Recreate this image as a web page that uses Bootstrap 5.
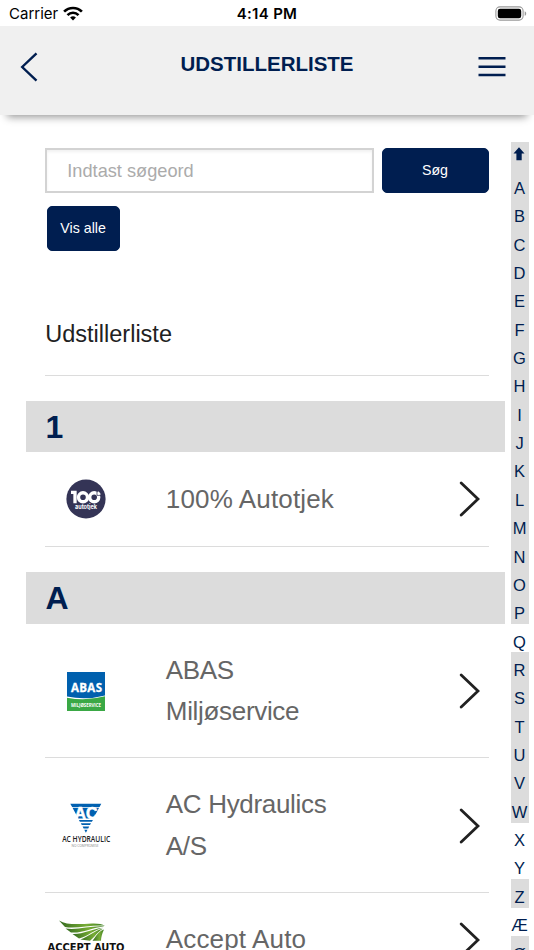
<!DOCTYPE html>
<html lang="da">
<head>
<meta charset="utf-8">
<meta name="viewport" content="width=device-width, initial-scale=1">
<title>Udstillerliste</title>
<link href="https://cdn.jsdelivr.net/npm/bootstrap@5.3.0/dist/css/bootstrap.min.css" rel="stylesheet">
<style>
  :root { --navy: #001e50; --band: #dcdcdc; }
  body { font-family: "Liberation Sans", Arial, sans-serif; color: #212121; height: 950px; overflow: hidden; background: #fff; }
  svg { display: block; flex: none; }
  .status-bar { height: 26px; padding: 1px 7px 0 9px; font: 500 15px/26px Inter, sans-serif; color: #000; }
  .status-bar > * { flex: 1 1 0; }
  .carrier { font-weight: 400; font-size: 15px; }
  .clock { font-weight: 600; letter-spacing: .3px; position: relative; left: -1px; }
  .app-bar { height: 89px; background: #f0f0f0; padding: 0 28px 0 20px; box-shadow: 0 9px 8px -7px rgba(0,0,0,.42); color: var(--navy); }
  .app-bar h1 { font-size: 20.5px; font-weight: 700; line-height: 24px; margin: 0 0 13px 18px; }
  .app-bar svg { margin-bottom: 8px; }
  .main-col { width: 505px; padding: 32.5px 0 0 26px; }
  .inset { margin-left: 19.3px; margin-right: 16.5px; }
  .search-input { width: 328.5px; height: 45px; border: 2px solid #d3d3d3; border-radius: 0; padding: 2px 20px 0; font-size: 18.2px; box-shadow: inset 0 2px 3px rgba(0,0,0,.06); }
  .search-input::placeholder { color: #ababab; opacity: 1; }
  .btn-navy { --bs-btn-bg: #001e50; --bs-btn-color: #fff; --bs-btn-border-color: #001e50; --bs-btn-hover-bg: #0a2c66; --bs-btn-hover-color: #fff; height: 45px; border-radius: 5px; font-size: 14.2px; padding: 1px 0 0; }
  .btn-search { width: 107px; }
  .btn-all { width: 73px; margin: 13px 0 0 1.3px; }
  .list-title { font-size: 23.5px; line-height: 30px; margin-top: 68px; margin-bottom: 0; padding-bottom: 26px; border-bottom: 1.5px solid #dcdcdc; font-weight: 400; }
  .band { height: 51.5px; margin-top: 25px; padding-left: 19.5px; background: var(--band); color: var(--navy); font-size: 32px; font-weight: 700; line-height: 52px; margin-bottom: 0; }
  .entry { padding: 26.5px 9px 26.6px 0; border-bottom: 1.5px solid #dcdcdc; }
  .entry.tall { padding-top: 26px; padding-bottom: 25.2px; }
  .entry-logo { width: 81px; }
  .entry-name { padding-left: 39.5px; font-size: 26px; letter-spacing: .15px; line-height: 41.2px; color: #666; }
  .tall .entry-name { letter-spacing: -.32px; }
  .alpha { width: 18px; margin: 27px 0 0 5.5px; font-size: 16.5px; color: var(--navy); }
  .alpha a { height: 28.37px; flex: none; padding-top: 9.5px; color: inherit; text-decoration: none; background: var(--band); line-height: 1; }
  .alpha a.top-link { padding-top: 5px; padding-right: 1px; }
  .alpha a.none { background: transparent; }
</style>
<script src="https://cdn.jsdelivr.net/npm/bootstrap@5.3.0/dist/js/bootstrap.bundle.min.js"></script>
</head>
<body>
<div class="status-bar d-flex align-items-center">
  <div class="d-flex align-items-center carrier">Carrier
    <svg width="22" height="16" viewBox="0 0 22 16" fill="none" stroke="#000" stroke-width="2.6" class="ms-1"><path d="M2.1 5.7a12.4 12.4 0 0 1 17.8 0M5.5 9.1a7.7 7.7 0 0 1 11 0"/><path d="M11 14.5 8.1 11.6a4.1 4.1 0 0 1 5.8 0Z" fill="#000" stroke="none"/></svg>
  </div>
  <div class="text-center clock">4:14 PM</div>
  <div class="d-flex justify-content-end">
    <svg width="32" height="15" viewBox="0 0 32 15"><rect x=".9" y=".9" width="27.2" height="13.2" rx="4" fill="none" stroke="#999" stroke-width="1.1"/><rect x="2.8" y="2.8" width="23.4" height="9.4" rx="2.2"/><path d="M29.7 5.2c2 .8 2 3.8 0 4.6z" fill="#999"/></svg>
  </div>
</div>
<header class="app-bar position-relative d-flex align-items-center justify-content-between">
  <svg width="18" height="30" viewBox="0 0 18 30" fill="none" stroke="#001e50" stroke-width="2.4"><path d="M16.500 1.300 2.200 15l14.300 13.700"/></svg>
  <h1>UDSTILLERLISTE</h1>
  <svg width="28" height="20" viewBox="0 0 28 20" fill="#001e50"><path d="M.5 0h27v2.500H.5zM.5 8.500h27v2.500H.5zM.5 16.700h27v2.500H.5z"/></svg>
</header>
<div class="d-flex">
  <main class="main-col flex-shrink-0">
    <form class="inset">
      <div class="d-flex justify-content-between">
        <input class="form-control search-input" type="text" placeholder="Indtast søgeord">
        <button class="btn btn-navy btn-search" type="button">Søg</button>
      </div>
      <button class="btn btn-navy btn-all" type="button">Vis alle</button>
    </form>
    <h2 class="list-title inset">Udstillerliste</h2>

    <h3 class="band">1</h3>
    <div class="entry inset d-flex align-items-center">
      <div class="entry-logo d-flex justify-content-center">
        <svg width="40" height="40" viewBox="0 0 40 40"><circle cx="20" cy="20" r="19.6" fill="#343456"/><path d="M5 13.400h4V24.300" fill="none" stroke="#fff" stroke-width="3.300"/><g fill="none" stroke="#fff" stroke-width="3.400"><circle cx="17" cy="18.300" r="4.500"/><circle cx="28.200" cy="18.300" r="4.500"/></g><path d="M31 11.800v4.500h3.400" fill="none" stroke="#343456" stroke-width=".8"/><path d="M31.800 12.300c1.700.7 2.700 1.900 2.800 3.400h-2.800z" fill="#fff"/><text x="20" y="30.200" text-anchor="middle" textLength="22" lengthAdjust="spacingAndGlyphs" font-family="Inter, sans-serif" font-weight="700" font-size="6.600" fill="#fff">autotjek</text></svg>
      </div>
      <div class="entry-name flex-grow-1">100% Autotjek</div>
      <svg width="21" height="36" viewBox="0 0 21 36" fill="none" stroke="#212121" stroke-width="2.8" stroke-linecap="round"><path d="M2.2 2 19 18 2.2 34"/></svg>
    </div>

    <h3 class="band">A</h3>
    <div class="entry tall inset d-flex align-items-center">
      <div class="entry-logo d-flex justify-content-center">
        <svg width="38" height="39" viewBox="0 0 38 39"><path d="M0 0h38v39H0z" fill="#fff"/><path d="M0 0h38v23.500Q19 28.500 0 24.500z" fill="#0060ae"/><path d="M0 25.700q19 3.600 38-1.400V39H0z" fill="#3aa845"/><text x="4" y="20" textLength="31" lengthAdjust="spacing" font-family="Open Sans, sans-serif" font-weight="700" font-size="11.500" fill="#fff" stroke="#fff" stroke-width=".3">ABAS</text><text x="19" y="35.200" text-anchor="middle" textLength="30" lengthAdjust="spacingAndGlyphs" font-family="Open Sans, sans-serif" font-weight="700" font-size="5" fill="#fff">MILJØSERVICE</text></svg>
      </div>
      <div class="entry-name flex-grow-1">ABAS<br>Miljøservice</div>
      <svg width="21" height="36" viewBox="0 0 21 36" fill="none" stroke="#212121" stroke-width="2.8" stroke-linecap="round"><path d="M2.2 2 19 18 2.2 34"/></svg>
    </div>
    <div class="entry tall inset d-flex align-items-center">
      <div class="entry-logo d-flex justify-content-center">
        <svg width="50" height="46" viewBox="0 0 50 46"><path d="M9.300.7h31l-1.800 3.200H11.100zM11.500 4.700h26.600l-5.800 10.900H17.300zM17.900 17h14l-1 1.800H18.900zM19.800 20.300h10.200l-1 1.800h-8.200zM21.600 23.600h6.600l-1 1.800h-4.600zM23.300 26.800h3.200L24.900 29.700z" fill="#0060b0"/><text x="24.900" y="15.700" text-anchor="middle" textLength="23" lengthAdjust="spacingAndGlyphs" font-family="Liberation Sans, sans-serif" font-weight="700" font-size="16.500" fill="#fff" stroke="#fff" stroke-width=".6">AC</text><text x="25.200" y="39" text-anchor="middle" textLength="48" lengthAdjust="spacingAndGlyphs" font-family="Open Sans, sans-serif" font-weight="600" font-size="8" fill="#222">AC HYDRAULIC</text><text x="24" y="43.800" text-anchor="middle" textLength="27" lengthAdjust="spacingAndGlyphs" font-family="Open Sans, sans-serif" font-size="4" fill="#888">NO COMPROMISE</text></svg>
      </div>
      <div class="entry-name flex-grow-1">AC Hydraulics<br>A/S</div>
      <svg width="21" height="36" viewBox="0 0 21 36" fill="none" stroke="#212121" stroke-width="2.8" stroke-linecap="round"><path d="M2.2 2 19 18 2.2 34"/></svg>
    </div>
    <div class="entry inset d-flex align-items-center">
      <div class="entry-logo d-flex justify-content-center">
        <svg width="80" height="40" viewBox="0 0 80 40"><defs><linearGradient id="leaf" x1="0" x2="1"><stop offset="0" stop-color="#346b20"/><stop offset=".6" stop-color="#78ad35"/><stop offset="1" stop-color="#3c7c22"/></linearGradient></defs><g fill="url(#leaf)"><path d="M13 .5c8 5 21 3.500 33 3 6-.2 10 .6 13 2.200C45 4.800 30 9 19 7z"/><path d="M19.500 8.500c12 2 26-3.200 39-2C46 7.500 36 13.500 25 12.500z"/><path d="M26.500 14C37 14.500 46 8.700 57 7.700 48 10 42 16 33 18.500z"/><path d="M34.500 19.500C43 16.500 48 10.500 57 8.700 51 12 49 17 44 20.700z"/><path d="M46.500 20.700C50 17 51 12 58 9.500c-2 4-3 8-3 11.200z"/></g><text x="40" y="31.200" text-anchor="middle" textLength="77" lengthAdjust="spacingAndGlyphs" font-family="DejaVu Sans, sans-serif" font-weight="700" font-size="10.300" fill="#111">ACCEPT AUTO</text></svg>
      </div>
      <div class="entry-name flex-grow-1">Accept Auto</div>
      <svg width="21" height="36" viewBox="0 0 21 36" fill="none" stroke="#212121" stroke-width="2.8" stroke-linecap="round"><path d="M2.2 2 19 18 2.2 34"/></svg>
    </div>
  </main>
  <nav class="alpha d-flex flex-column text-center flex-shrink-0">
    <a href="#" class="top-link d-flex justify-content-center"><svg width="12" height="14" viewBox="0 0 12 14"><path d="M6 .3 11.500 6.600H8.700V13.300H3.400V6.600H.5z" fill="#001e50"/></svg></a>
    <a href="#">A</a><a href="#">B</a><a href="#">C</a><a href="#">D</a><a href="#">E</a><a href="#">F</a><a href="#">G</a><a href="#">H</a><a href="#">I</a><a href="#">J</a><a href="#">K</a><a href="#">L</a><a href="#">M</a><a href="#">N</a><a href="#">O</a><a href="#">P</a><a href="#" class="none">Q</a><a href="#">R</a><a href="#">S</a><a href="#">T</a><a href="#">U</a><a href="#">V</a><a href="#">W</a><a href="#" class="none">X</a><a href="#" class="none">Y</a><a href="#">Z</a><a href="#" class="none">Æ</a><a href="#">Ø</a>
  </nav>
</div>
</body>
</html>
